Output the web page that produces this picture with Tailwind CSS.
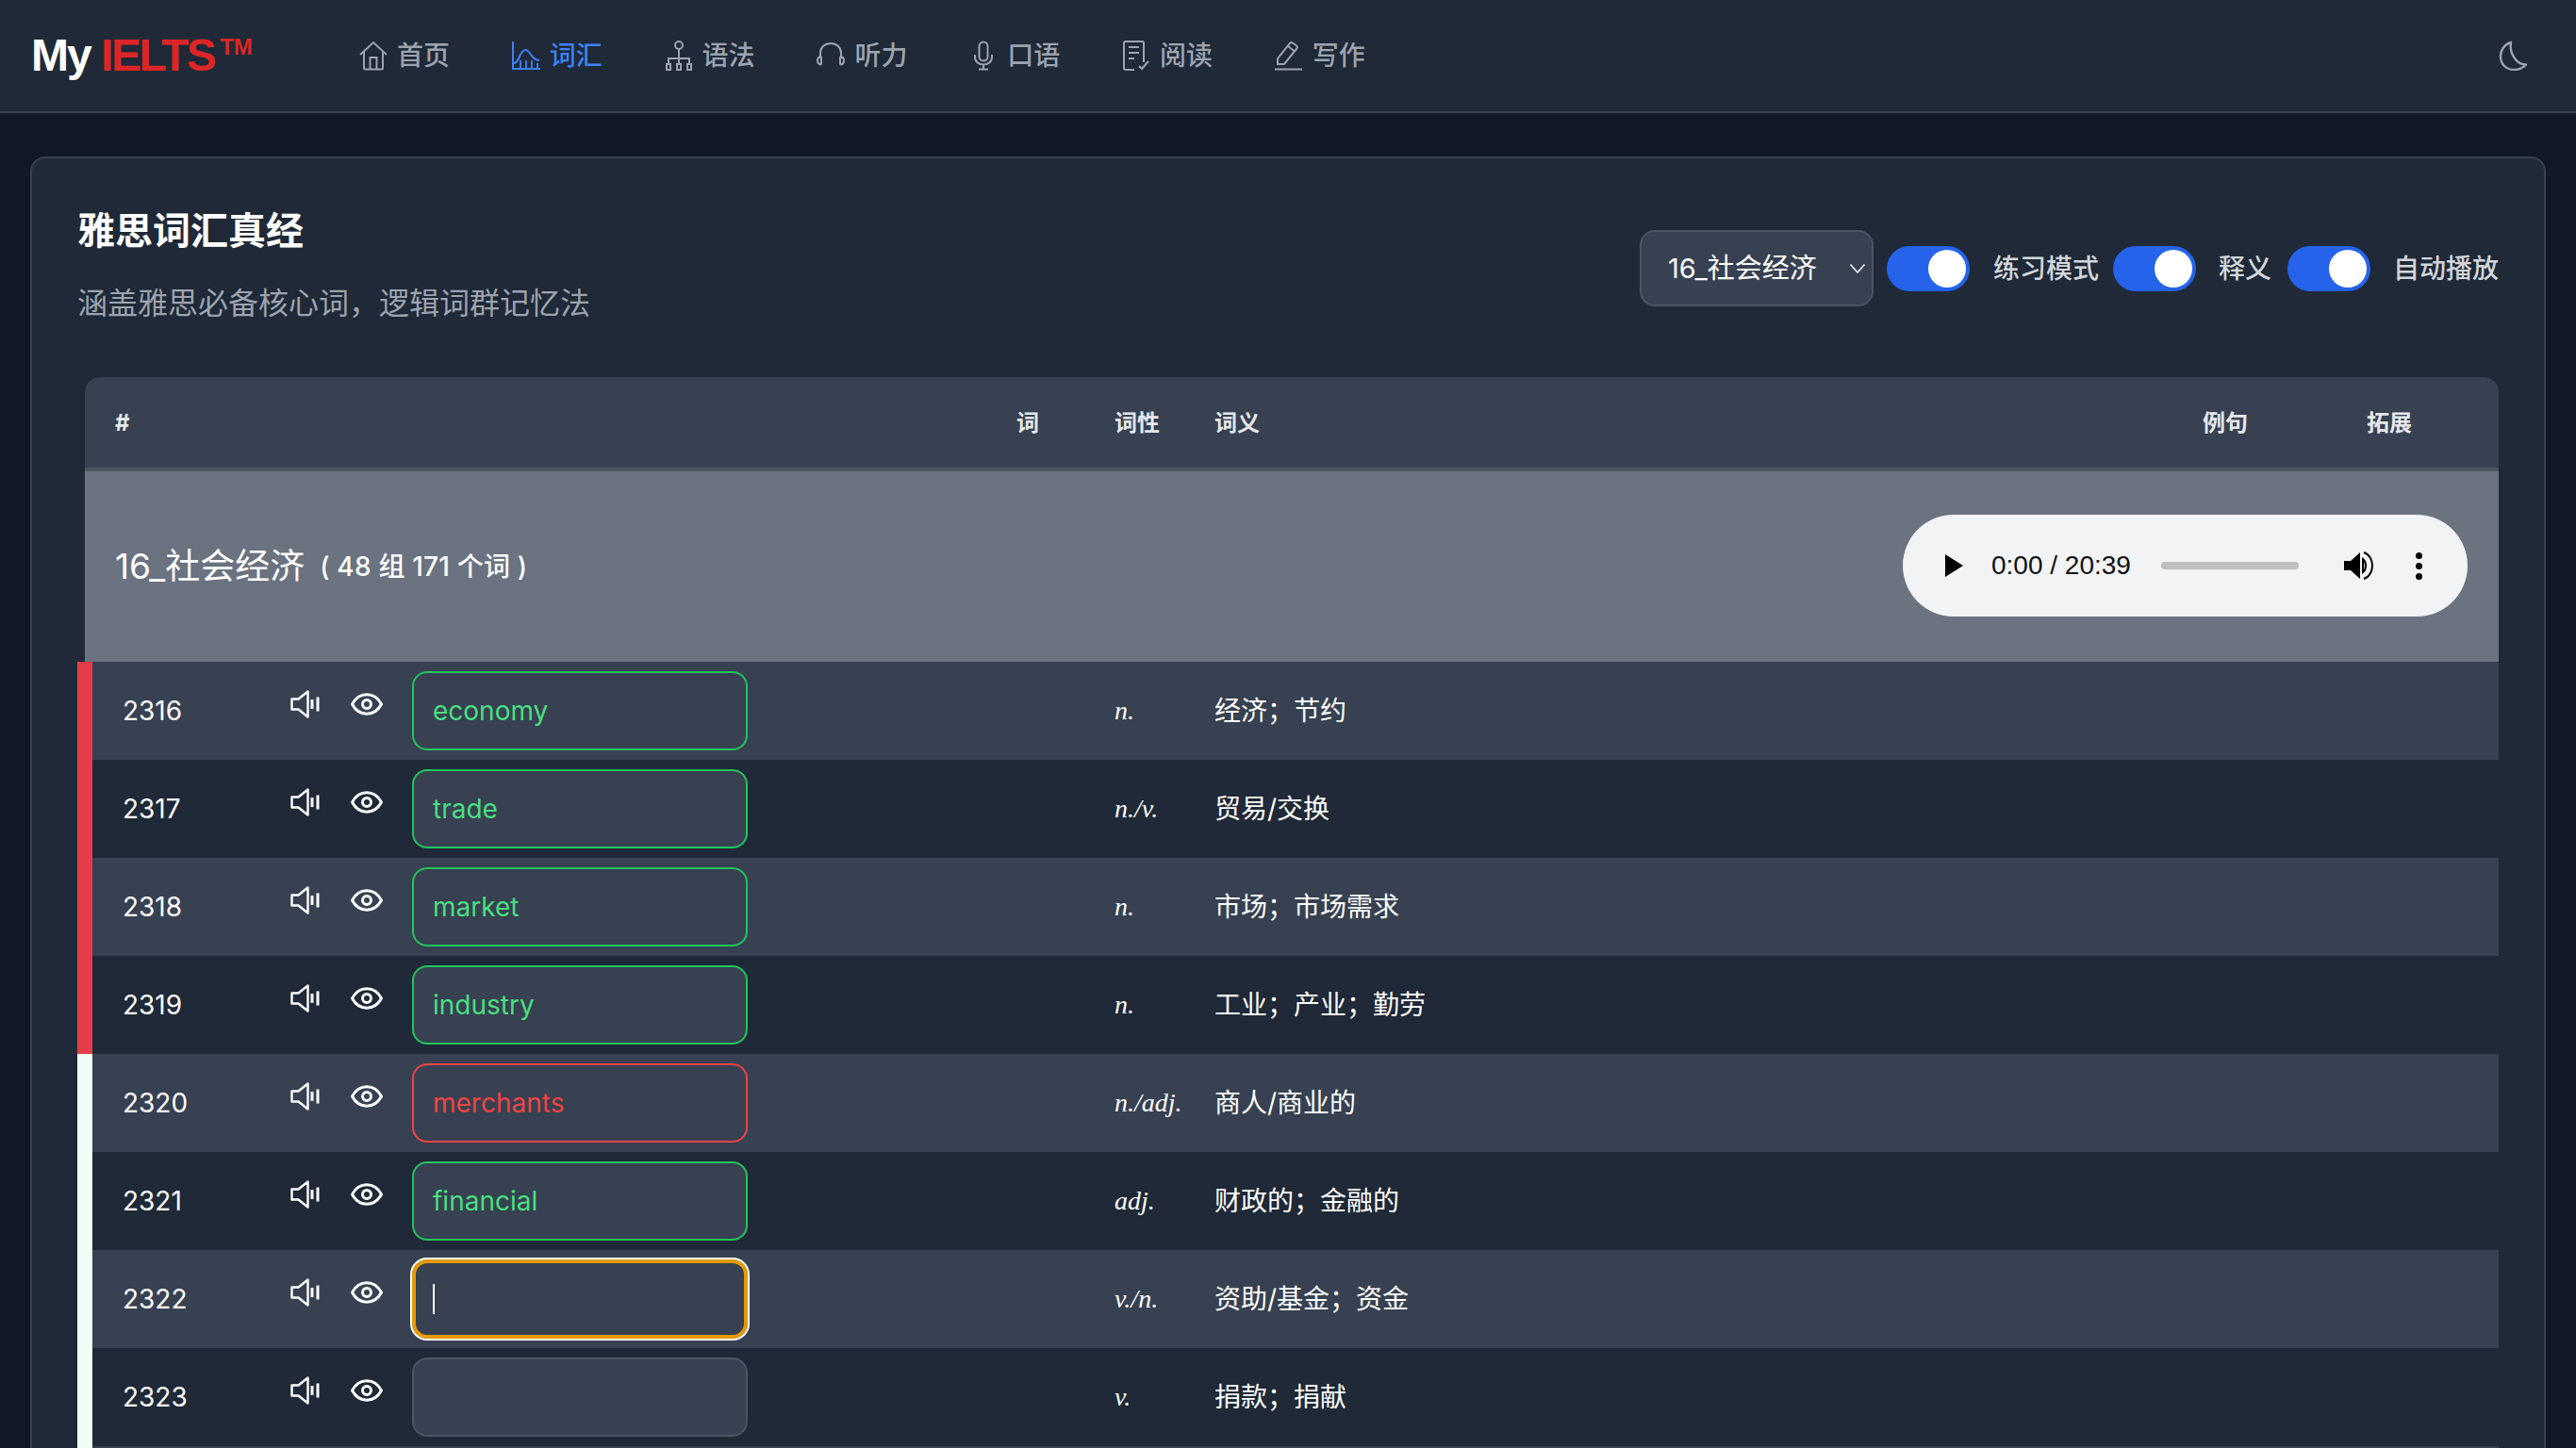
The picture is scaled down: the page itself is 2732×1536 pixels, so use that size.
<!DOCTYPE html>
<html lang="en">
  <head>
    <meta charset="UTF-8" />
    <meta name="viewport" content="width=device-width, initial-scale=1.0" />
    <title>My IELTS</title>
    <script src="https://cdn.jsdelivr.net/npm/@tailwindcss/browser@4"></script>
  </head>
  <body class="bg-[#111827] text-white h-screen overflow-hidden font-['Inter','Noto_Sans_CJK_SC',sans-serif]">
    <!-- shared row icons -->
    <svg class="hidden">
      <symbol id="speaker" viewBox="0 0 32 30" fill="none" stroke="currentColor" stroke-width="2.4" stroke-linejoin="round">
        <path d="M1.5 9.5h7L18.5 1.5v27l-10-8h-7z" />
        <path d="M23 10v10M29 7.500v15" stroke-width="3" />
      </symbol>
      <symbol id="eye" viewBox="0 0 34 24" fill="none" stroke="currentColor" stroke-width="3">
        <path d="M1.500 12C5 5.500 10.500 1.800 17 1.800S29 5.500 32.500 12C29 18.500 23.500 22.200 17 22.200S5 18.500 1.500 12z" />
        <circle cx="17" cy="12" r="4.500" />
      </symbol>
    </svg>

    <nav class="h-[120px] bg-[#1f2937] border-b-2 border-[#374151] flex items-center pl-[33px] pr-[50px]">
      <div class="w-[347px] text-[48px] font-bold tracking-[-2px] font-['Liberation_Sans',sans-serif] whitespace-nowrap">
        My <span class="text-[#dc2626] tracking-[-2.400px]">IELTS<span class="ml-[6px] text-[24px] align-[17px] tracking-[-0.500px]">TM</span></span>
      </div>
      <div class="flex items-center gap-[63.800px] text-[28px] font-medium text-[#9ca3af]">
        <a class="flex items-center gap-[9px] w-[98px]">
          <svg class="w-[32px] h-[32px]" viewBox="0 0 32 32" fill="none" stroke="currentColor" stroke-width="2">
            <path d="M2 15L16 2l14 13M6 12v17a1.500 1.500 0 0 0 1.500 1.500h17A1.500 1.500 0 0 0 26 29V12M12.500 30.500V18h7v12.500" />
          </svg>
          <span>首页</span>
        </a>
        <a class="flex items-center gap-[9px] w-[98px] text-[#3b82f6]">
          <svg class="w-[32px] h-[32px]" viewBox="0 0 32 32" fill="none" stroke="currentColor" stroke-width="2">
            <path d="M2 1v29h29" />
            <path d="M3 24c6 0 6-14 12-14s6 11 15 11" />
            <path d="M10 30v-9M16 30v-9M22 30v-9M28 30v-6" stroke-width="1.800" />
          </svg>
          <span>词汇</span>
        </a>
        <a class="flex items-center gap-[9px] w-[98px]">
          <svg class="w-[32px] h-[32px]" viewBox="0 0 32 32" fill="none" stroke="currentColor" stroke-width="2">
            <circle cx="16" cy="5" r="4" />
            <path d="M16 9v10M5 24v-5h22v5M16 19v5" />
            <rect x="3" y="25" width="4" height="6" />
            <rect x="14" y="25" width="4" height="6" />
            <rect x="25" y="25" width="4" height="6" />
          </svg>
          <span>语法</span>
        </a>
        <a class="flex items-center gap-[9px] w-[98px]">
          <svg class="w-[32px] h-[32px]" viewBox="0 0 32 32" fill="none" stroke="currentColor" stroke-width="2">
            <path d="M5 19v-6C5 7 10 3 16 3s11 4 11 10v6" />
            <path d="M5 17c-2 .5-3 2-3 4s1 4 3 4.500a1 1 0 0 0 1-1V18a1 1 0 0 0-1-1zM27 17c2 .5 3 2 3 4s-1 4-3 4.500a1 1 0 0 1-1-1V18a1 1 0 0 1 1-1z" />
          </svg>
          <span>听力</span>
        </a>
        <a class="flex items-center gap-[9px] w-[98px]">
          <svg class="w-[32px] h-[32px]" viewBox="0 0 32 32" fill="none" stroke="currentColor" stroke-width="2">
            <rect x="11.500" y="1.500" width="9" height="20" rx="4.500" />
            <path d="M7 15v2.500c0 5 4 8 9 8s9-3 9-8V15M16 25.500V30M11 30.500h10" />
          </svg>
          <span>口语</span>
        </a>
        <a class="flex items-center gap-[9px] w-[98px]">
          <svg class="w-[32px] h-[32px]" viewBox="0 0 32 32" fill="none" stroke="currentColor" stroke-width="2">
            <path d="M14 31H4.500A1.500 1.500 0 0 1 3 29.500v-27A1.500 1.500 0 0 1 4.500 1h18A1.500 1.500 0 0 1 24 2.500V23" />
            <path d="M8 7h11M8 13h11M8 19h6M19 27l3 3 7-8" />
          </svg>
          <span>阅读</span>
        </a>
        <a class="flex items-center gap-[9px] w-[98px]">
          <svg class="w-[32px] h-[32px]" viewBox="0 0 32 32" fill="none" stroke="currentColor" stroke-width="2">
            <path d="M4 25v-6L17 3a2 2 0 0 1 3-.500l4 3a2 2 0 0 1 .300 3L11 25zM15 6l7 5.500M1 30.500h29" />
          </svg>
          <span>写作</span>
        </a>
      </div>
      <svg class="ml-auto w-[32px] h-[32px] text-[#9ca3af]" viewBox="0 0 32 32" fill="none" stroke="currentColor" stroke-width="2.400" stroke-linejoin="round">
        <path d="M13 2C6 4 2 10 2 17c0 8 6 14 14 14 5 0 10-2 13-5.500C20 26 11 15 13 2z" />
      </svg>
    </nav>

    <main class="px-[32px] pt-[46px]">
      <div class="bg-[#1f2937] border-2 border-b-0 border-[#374151] rounded-t-[16px] pl-[48px] pr-[48px] pt-[48px] h-[1370px] overflow-hidden">
        <div class="flex justify-between h-[184px]">
          <div>
            <h1 class="text-[40px] leading-[60px] font-bold -mt-[1px]">雅思词汇真经</h1>
            <p class="text-[32px] leading-[48px] text-[#9ca3af] mt-[23px]">涵盖雅思必备核心词，逻辑词群记忆法</p>
          </div>
          <div class="flex items-center h-[81px] mt-[28px] text-[28px] font-medium text-[#d1d5db]">
            <div class="w-[248px] h-[81px] bg-[#374151] border-2 border-[#4b5563] rounded-[16px] flex items-center justify-between pl-[28px] pr-[6px] text-white font-normal text-[29px]">
              <span>16_社会经济</span>
              <svg class="w-[18px] h-[12px] text-[#e5e7eb]" viewBox="0 0 18 12" fill="none" stroke="currentColor" stroke-width="1.800">
                <path d="M1.500 1.500L9 10l7.500-8.500" />
              </svg>
            </div>
            <span class="ml-[14px] w-[88px] h-[48px] rounded-full bg-[#2563eb] p-[4px] flex justify-end"><span class="w-[40px] h-[40px] rounded-full bg-white"></span></span>
            <span class="ml-[25px]">练习模式</span>
            <span class="ml-[15px] w-[88px] h-[48px] rounded-full bg-[#2563eb] p-[4px] flex justify-end"><span class="w-[40px] h-[40px] rounded-full bg-white"></span></span>
            <span class="ml-[24px]">释义</span>
            <span class="ml-[17px] w-[88px] h-[48px] rounded-full bg-[#2563eb] p-[4px] flex justify-end"><span class="w-[40px] h-[40px] rounded-full bg-white"></span></span>
            <span class="ml-[24px]">自动播放</span>
          </div>
        </div>

        <div class="pl-[8px]">
          <!-- header -->
          <div class="h-[100px] bg-[#374151] border-b-4 border-[#4b5563] rounded-t-[16px] flex items-center pt-[2px] text-[24px] font-bold text-[#e5e7eb]">
            <span class="ml-[32px] w-[956px]">#</span>
            <span class="w-[104px]">词</span>
            <span class="w-[106px]">词性</span>
            <span class="w-[1048px]">词义</span>
            <span class="w-[174px]">例句</span>
            <span>拓展</span>
          </div>
          <!-- group with audio -->
          <div class="h-[202px] bg-[#6b7280] flex items-center justify-between pl-[32px] pr-[33px]">
            <div class="flex items-center">
              <span class="text-[37px]">16_社会经济</span>
              <span class="ml-[16px] text-[28px] font-medium tracking-[0.200px]">( 48 组 171 个词 )</span>
            </div>
            <div class="w-[599px] h-[108px] -mt-[2px] rounded-full bg-[#f1f3f4] flex items-center pl-[45px] text-black">
              <svg class="w-[19px] h-[24px]" viewBox="0 0 19 24"><path d="M0 0l19 12L0 24z" /></svg>
              <span class="ml-[30px] w-[180px] text-[28px] leading-none font-['Liberation_Sans',sans-serif] text-[#111]">0:00 / 20:39</span>
              <span class="w-[146px] h-[8px] rounded-full bg-[#bfbfbf]"></span>
              <svg class="ml-[48px] w-[32px] h-[30px]" viewBox="0 0 32 30" fill="black">
                <path d="M0 10h7L17 1v28L7 20H0z" />
                <path d="M20 8c4 3 4 11 0 14zM21 1c12 4 12 24 0 28" stroke="black" stroke-width="2" fill="none" />
              </svg>
              <span class="ml-[44px] flex flex-col gap-[4px]">
                <span class="w-[7px] h-[7px] rounded-full bg-black"></span>
                <span class="w-[7px] h-[7px] rounded-full bg-black"></span>
                <span class="w-[7px] h-[7px] rounded-full bg-black"></span>
              </span>
            </div>
          </div>
        </div>

        <!-- rows -->
        <div class="text-[28px]">
          <div class="h-[104px] flex items-center border-l-[16px] border-[#e53e4a] bg-[#374151]">
            <span class="pl-[32px] w-[210px]">2316</span>
            <svg class="w-[32px] h-[30px] -mt-[14px]"><use href="#speaker" /></svg>
            <svg class="ml-[32px] w-[34px] h-[24px] -mt-[14px]"><use href="#eye" /></svg>
            <span class="ml-[31px] w-[356px] h-[84px] flex items-center pl-[20px] bg-[#374151] border-2 border-[#22c55e] rounded-[16px] text-[#4ade80]">economy</span>
            <span class="ml-[389px] w-[106px] italic font-['Liberation_Serif',serif]">n.</span>
            <span>经济；节约</span>
          </div>
          <div class="h-[104px] flex items-center border-l-[16px] border-[#e53e4a] bg-[#1f2937]">
            <span class="pl-[32px] w-[210px]">2317</span>
            <svg class="w-[32px] h-[30px] -mt-[14px]"><use href="#speaker" /></svg>
            <svg class="ml-[32px] w-[34px] h-[24px] -mt-[14px]"><use href="#eye" /></svg>
            <span class="ml-[31px] w-[356px] h-[84px] flex items-center pl-[20px] bg-[#374151] border-2 border-[#22c55e] rounded-[16px] text-[#4ade80]">trade</span>
            <span class="ml-[389px] w-[106px] italic font-['Liberation_Serif',serif]">n./v.</span>
            <span>贸易/交换</span>
          </div>
          <div class="h-[104px] flex items-center border-l-[16px] border-[#e53e4a] bg-[#374151]">
            <span class="pl-[32px] w-[210px]">2318</span>
            <svg class="w-[32px] h-[30px] -mt-[14px]"><use href="#speaker" /></svg>
            <svg class="ml-[32px] w-[34px] h-[24px] -mt-[14px]"><use href="#eye" /></svg>
            <span class="ml-[31px] w-[356px] h-[84px] flex items-center pl-[20px] bg-[#374151] border-2 border-[#22c55e] rounded-[16px] text-[#4ade80]">market</span>
            <span class="ml-[389px] w-[106px] italic font-['Liberation_Serif',serif]">n.</span>
            <span>市场；市场需求</span>
          </div>
          <div class="h-[104px] flex items-center border-l-[16px] border-[#e53e4a] bg-[#1f2937]">
            <span class="pl-[32px] w-[210px]">2319</span>
            <svg class="w-[32px] h-[30px] -mt-[14px]"><use href="#speaker" /></svg>
            <svg class="ml-[32px] w-[34px] h-[24px] -mt-[14px]"><use href="#eye" /></svg>
            <span class="ml-[31px] w-[356px] h-[84px] flex items-center pl-[20px] bg-[#374151] border-2 border-[#22c55e] rounded-[16px] text-[#4ade80]">industry</span>
            <span class="ml-[389px] w-[106px] italic font-['Liberation_Serif',serif]">n.</span>
            <span>工业；产业；勤劳</span>
          </div>
          <div class="h-[104px] flex items-center border-l-[16px] border-[#f0fdf4] bg-[#374151]">
            <span class="pl-[32px] w-[210px]">2320</span>
            <svg class="w-[32px] h-[30px] -mt-[14px]"><use href="#speaker" /></svg>
            <svg class="ml-[32px] w-[34px] h-[24px] -mt-[14px]"><use href="#eye" /></svg>
            <span class="ml-[31px] w-[356px] h-[84px] flex items-center pl-[20px] bg-[#374151] border-2 border-[#ef4444] rounded-[16px] text-[#ef4444]">merchants</span>
            <span class="ml-[389px] w-[106px] italic font-['Liberation_Serif',serif]">n./adj.</span>
            <span>商人/商业的</span>
          </div>
          <div class="h-[104px] flex items-center border-l-[16px] border-[#f0fdf4] bg-[#1f2937]">
            <span class="pl-[32px] w-[210px]">2321</span>
            <svg class="w-[32px] h-[30px] -mt-[14px]"><use href="#speaker" /></svg>
            <svg class="ml-[32px] w-[34px] h-[24px] -mt-[14px]"><use href="#eye" /></svg>
            <span class="ml-[31px] w-[356px] h-[84px] flex items-center pl-[20px] bg-[#374151] border-2 border-[#22c55e] rounded-[16px] text-[#4ade80]">financial</span>
            <span class="ml-[389px] w-[106px] italic font-['Liberation_Serif',serif]">adj.</span>
            <span>财政的；金融的</span>
          </div>
          <div class="h-[104px] flex items-center border-l-[16px] border-[#f0fdf4] bg-[#374151]">
            <span class="pl-[32px] w-[210px]">2322</span>
            <svg class="w-[32px] h-[30px] -mt-[14px]"><use href="#speaker" /></svg>
            <svg class="ml-[32px] w-[34px] h-[24px] -mt-[14px]"><use href="#eye" /></svg>
            <span class="ml-[31px] w-[356px] h-[84px] flex items-center pl-[18px] bg-[#374151] border-4 border-[#e59a00] outline-2 outline-white rounded-[16px]"><span class="w-[2px] h-[32px] bg-white"></span></span>
            <span class="ml-[389px] w-[106px] italic font-['Liberation_Serif',serif]">v./n.</span>
            <span>资助/基金；资金</span>
          </div>
          <div class="h-[104px] flex items-center border-l-[16px] border-[#f0fdf4] bg-[#1f2937]">
            <span class="pl-[32px] w-[210px]">2323</span>
            <svg class="w-[32px] h-[30px] -mt-[14px]"><use href="#speaker" /></svg>
            <svg class="ml-[32px] w-[34px] h-[24px] -mt-[14px]"><use href="#eye" /></svg>
            <span class="ml-[31px] w-[356px] h-[84px] bg-[#374151] border-2 border-[#4b5563] rounded-[16px]"></span>
            <span class="ml-[389px] w-[106px] italic font-['Liberation_Serif',serif]">v.</span>
            <span>捐款；捐献</span>
          </div>
          <div class="h-[2px] border-l-[16px] border-[#f0fdf4] bg-[#374151]"></div>
        </div>
      </div>
    </main>
  </body>
</html>
